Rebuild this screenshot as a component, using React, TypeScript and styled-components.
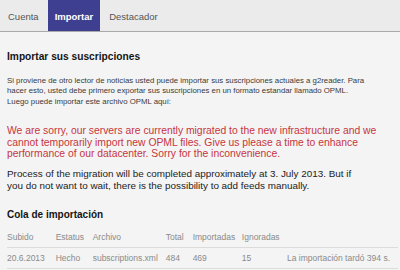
import React from "react";
import styled, { createGlobalStyle } from "styled-components";

const Global = createGlobalStyle`
  html, body { margin: 0; padding: 0; }
  body {
    width: 400px;
    height: 270px;
    overflow: hidden;
    background: #f4f4f4;
    font-family: "Liberation Sans", Arial, sans-serif;
  }
`;

const Page = styled.div`
  width: 400px;
  height: 270px;
  display: flex;
  flex-direction: column;
  background: #f4f4f4;
`;

const TabBar = styled.nav`
  display: flex;
  gap: 2px;
  height: 32px;
  padding-left: 1px;
  background: #ebebeb;
  border-bottom: 1px solid #a9a9a9;
  box-sizing: border-box;
`;

const Tab = styled.div<{ $active?: boolean }>`
  display: flex;
  align-items: center;
  padding: 2px 7px 0 7px;
  height: 31px;
  box-sizing: border-box;
  font-size: 9.5px;
  font-weight: ${(p) => (p.$active ? 700 : 400)};
  color: ${(p) => (p.$active ? "#ffffff" : "#555555")};
  background: ${(p) => (p.$active ? "#3f3f92" : "transparent")};
`;

const Content = styled.main`
  padding: 18px 2px 0 7px;
  display: flex;
  flex-direction: column;
`;

const Heading = styled.h2`
  margin: 0;
  font-size: 10.2px;
  line-height: 14px;
  font-weight: 700;
  color: #151515;
`;

const Intro = styled.p`
  margin: 12px 0 0 0;
  font-size: 7.8px;
  line-height: 10.3px;
  white-space: nowrap;
  color: #3a3a3a;
`;

const Alert = styled.p`
  margin: 18.5px 0 0 0;
  max-width: 386px;
  font-size: 10.35px;
  line-height: 11.5px;
  color: #c7353c;
`;

const Notice = styled.p`
  margin: 8px 0 0 0;
  max-width: 360px;
  font-size: 9.9px;
  line-height: 12px;
  color: #222222;
`;

const SubHeading = styled.h3`
  margin: 16.5px 0 0 0;
  font-size: 10px;
  line-height: 14px;
  font-weight: 700;
  color: #151515;
`;

const Table = styled.table`
  margin-top: 5px;
  width: 100%;
  border-collapse: collapse;
  font-size: 8.5px;
  color: #8a8a8a;
`;

const Th = styled.th<{ $w?: number }>`
  text-align: left;
  font-weight: 400;
  padding: 0;
  height: 20px;
  box-sizing: border-box;
  vertical-align: middle;
  border-bottom: 1px solid #dcdcdc;
  width: ${(p) => (p.$w ? `${p.$w}px` : "auto")};
`;

const Td = styled.td<{ $right?: boolean }>`
  padding: 0 ${(p) => (p.$right ? "8px" : "0")} 0 0;
  height: 21px;
  box-sizing: border-box;
  white-space: nowrap;
  text-align: ${(p) => (p.$right ? "right" : "left")};
  border-bottom: 1px solid #dcdcdc;
  vertical-align: middle;
`;

export default function App() {
  return (
    <>
      <Global />
      <Page>
        <TabBar>
          <Tab>Cuenta</Tab>
          <Tab $active>Importar</Tab>
          <Tab>Destacador</Tab>
        </TabBar>
        <Content>
          <Heading>Importar sus suscripciones</Heading>
          <Intro>
            Si proviene de otro lector de noticias usted puede importar sus suscripciones actuales a g2reader. Para
            <br />
            hacer esto, usted debe primero exportar sus suscripciones en un formato estandar llamado OPML.
            <br />
            Luego puede importar este archivo OPML aquí:
          </Intro>
          <Alert>
            We are sorry, our servers are currently migrated to the new infrastructure and we cannot temporarily
            import new OPML files. Give us please a time to enhance performance of our datacenter. Sorry for the
            inconvenience.
          </Alert>
          <Notice>
            Process of the migration will be completed approximately at 3. July 2013. But if you do not want to wait,
            there is the possibility to add feeds manually.
          </Notice>
          <SubHeading>Cola de importación</SubHeading>
          <Table>
            <thead>
              <tr>
                <Th $w={50}>Subido</Th>
                <Th $w={38}>Estatus</Th>
                <Th $w={74}>Archivo</Th>
                <Th $w={28}>Total</Th>
                <Th $w={50}>Importadas</Th>
                <Th $w={46}>Ignoradas</Th>
                <Th></Th>
              </tr>
            </thead>
            <tbody>
              <tr>
                <Td>20.6.2013</Td>
                <Td>Hecho</Td>
                <Td>subscriptions.xml</Td>
                <Td>484</Td>
                <Td>469</Td>
                <Td>15</Td>
                <Td $right>La importación tardó 394 s.</Td>
              </tr>
            </tbody>
          </Table>
        </Content>
      </Page>
    </>
  );
}
